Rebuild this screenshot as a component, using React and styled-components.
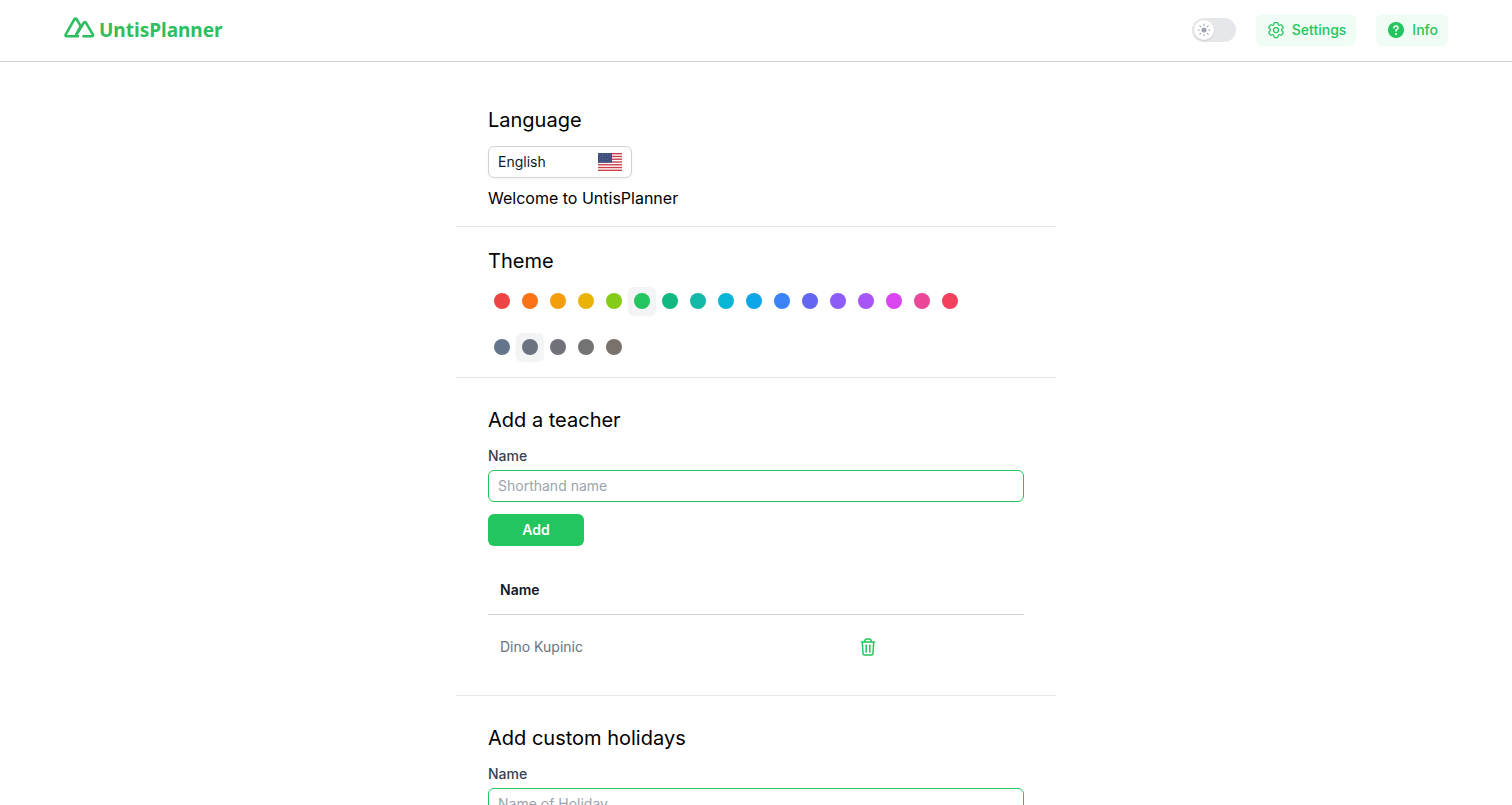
import React, { useState } from "react";
import styled, { createGlobalStyle } from "styled-components";
import { HiOutlineCog6Tooth } from "react-icons/hi2";

const Global = createGlobalStyle`
  *, *::before, *::after { box-sizing: border-box; }
  html { scrollbar-width: none; }
  body { margin: 0; background: #fff; color: #000; font: 16px/24px Inter, sans-serif; }
  h1, h2, p { margin: 0; }
  button, input, select { font: inherit; }
`;

const Header = styled.header`
  display: flex;
  align-items: center;
  justify-content: space-between;
  height: 62px;
  padding: 0 64px 2px;
  border-bottom: 1px solid #d4d4d8;
`;

const Logo = styled.a`
  display: flex;
  align-items: center;
  gap: 4px;
  color: #2dbe60;
  font: 700 19px/28px "Noto Sans", sans-serif;
  text-decoration: none;
`;

const Actions = styled.nav`
  display: flex;
  align-items: center;
  gap: 20px;
`;

const Toggle = styled.button`
  display: flex;
  align-items: center;
  width: 44px;
  height: 24px;
  padding: 2px;
  border: 0;
  border-radius: 12px;
  background: #e5e7eb;
`;

const Knob = styled.span`
  display: grid;
  place-items: center;
  width: 20px;
  height: 20px;
  border-radius: 50%;
  background: #fff;
  color: #9ca3af;
  box-shadow: 0 1px 2px rgba(0, 0, 0, 0.12);
`;

const NavButton = styled.a`
  display: flex;
  align-items: center;
  gap: 6px;
  height: 32px;
  padding: 0 10px;
  border-radius: 6px;
  background: #f0fdf4;
  color: #22c55e;
  font-size: 14px;
  line-height: 20px;
  font-weight: 500;
  text-decoration: none;
`;

const Main = styled.main`
  max-width: 600px;
  margin: 0 auto;
  padding-top: 16px;
`;

const Section = styled.section`
  padding: ${(p) => p.$top || 28}px 32px 16px;
  border-bottom: 1px solid #e5e7eb;
`;

const Heading = styled.h2`
  margin-bottom: 12px;
  font-size: 20px;
  line-height: 28px;
  font-weight: 400;
`;

const SelectBox = styled.div`
  display: grid;
  align-items: center;
  width: 144px;
  margin-bottom: 8px;

  > * { grid-area: 1 / 1; }
  > svg { justify-self: end; margin-right: 10px; pointer-events: none; }
`;

const Select = styled.select`
  appearance: none;
  width: 100%;
  height: 32px;
  padding: 0 9px;
  border: 1px solid #d1d5db;
  border-radius: 6px;
  background: #fff;
  color: #111827;
  font-size: 14px;
  line-height: 20px;
  box-shadow: 0 1px 2px rgba(0, 0, 0, 0.05);
`;

const Swatches = styled.div`
  display: flex;
  flex-wrap: wrap;

  & + & { margin-top: 18px; }
`;

const Swatch = styled.button`
  display: grid;
  place-items: center;
  width: 28px;
  height: 28px;
  padding: 0;
  border: 0;
  border-radius: 6px;
  background: ${(p) => (p.$active ? "#f3f4f6" : "transparent")};
  box-shadow: ${(p) => (p.$active ? "0 1px 2px rgba(0, 0, 0, 0.05)" : "none")};

  &::before {
    content: "";
    width: 16px;
    height: 16px;
    border-radius: 50%;
    background: ${(p) => p.$color};
  }
`;

const Label = styled.label`
  display: block;
  margin-bottom: 4px;
  color: #374151;
  font-size: 14px;
  line-height: 20px;
  font-weight: 500;
`;

const Input = styled.input`
  display: block;
  width: 100%;
  height: 32px;
  padding: 0 9px 1px;
  border: 1px solid #22c55e;
  border-radius: 6px;
  background: #fff;
  font-size: 14px;
  line-height: 20px;
  outline: none;

  &::placeholder { color: #9ca3af; opacity: 1; }
`;

const AddButton = styled.button`
  display: block;
  width: 96px;
  height: 32px;
  margin: 12px 0 20px;
  border: 0;
  border-radius: 6px;
  background: #22c55e;
  color: #fff;
  font-size: 14px;
  line-height: 20px;
  font-weight: 600;
`;

const Table = styled.table`
  width: 100%;
  border-collapse: separate;
  border-spacing: 0;
  table-layout: fixed;
  font-size: 14px;
  line-height: 20px;
  text-align: left;

  th { padding: 14px 12px; border-bottom: 1px solid #d1d5db; color: #111827; font-weight: 600; }
  th:first-child { width: 65%; }
  td { padding: 16px 12px; color: #6b7280; }
`;

const IconButton = styled.button`
  display: grid;
  place-items: center;
  width: 40px;
  height: 32px;
  padding: 0;
  border: 0;
  background: none;
  color: #22c55e;
`;

const LogoMark = () => (
  <svg width="31" height="26" viewBox="0 0 31 26" fill="none" stroke="currentColor" strokeWidth="2.6" strokeLinejoin="round" strokeLinecap="round" aria-hidden="true">
    <path d="M14 19.3H2.6q-1.6-.6-.8-2L10.3 2.4q1.2-1.6 2.4 0l4 6.8L11.7 18.6" />
    <path d="M13.6 15.8 19.8 5.8q1.1-1.4 2.2 0l6.8 11.5q.8 1.6-.8 2H19.4" />
  </svg>
);

const SunIcon = () => (
  <svg width="16" height="16" viewBox="0 0 16 16" fill="currentColor" stroke="currentColor" strokeWidth="1.2" strokeLinecap="round" aria-hidden="true">
    <circle cx="8" cy="8" r="2" />
    <path d="M8 2.2v1M8 12.8v1M2.2 8h1M12.8 8h1M3.9 3.9l.7.7M11.4 11.4l.7.7M3.9 12.1l.7-.7M11.4 4.6l.7-.7" />
  </svg>
);

const HelpIcon = () => (
  <svg width="20" height="20" viewBox="0 0 20 20" aria-hidden="true">
    <circle cx="10" cy="10" r="8" fill="currentColor" />
    <path d="M7.9 8q.1-2 2.1-2t2.1 1.8q0 1-1.1 1.6-1 .6-1 1.6" fill="none" stroke="#fff" strokeWidth="1.5" strokeLinecap="round" />
    <circle cx="10" cy="14" r="1" fill="#fff" />
  </svg>
);

const TrashIcon = () => (
  <svg width="16" height="20" viewBox="0 0 16 20" fill="none" stroke="currentColor" strokeWidth="1.5" strokeLinecap="round" strokeLinejoin="round" aria-hidden="true">
    <path d="M1.4 5h13.2M2.3 5l.7 11.6q.2 1.4 1.6 1.4h6.8q1.4 0 1.6-1.4L13.7 5M4.6 5q.2-3 2-3h2.8q1.8 0 2 3M6.2 8v7M9.8 8v7" />
  </svg>
);

const FlagIcon = () => (
  <svg width="24" height="18" viewBox="0 0 24 18" aria-hidden="true">
    <rect width="24" height="18" fill="#fff" />
    {[0, 1, 2, 3, 4, 5, 6].map((i) => (
      <rect key={i} y={(i * 36) / 13} width="24" height={18 / 13} fill="#c9414d" />
    ))}
    <rect width="14" height="9.7" fill="#3c4f7c" />
    {[0, 1, 2, 3].map((row) =>
      [0, 1, 2, 3, 4].map((col) => (
        <circle key={`${row}-${col}`} cx={1.6 + col * 2.6 + (row % 2) * 0.8} cy={1.6 + row * 2.2} r="0.35" fill="#a9b3c8" />
      ))
    )}
  </svg>
);

const PRIMARY = {
  red: "#ef4444", orange: "#f97316", amber: "#f59e0b", yellow: "#eab308", lime: "#84cc16",
  green: "#22c55e", emerald: "#10b981", teal: "#14b8a6", cyan: "#06b6d4", sky: "#0ea5e9",
  blue: "#3b82f6", indigo: "#6366f1", violet: "#8b5cf6", purple: "#a855f7", fuchsia: "#d946ef",
  pink: "#ec4899", rose: "#f43f5e",
};
const GRAYS = { slate: "#64748b", cool: "#6b7280", zinc: "#71717a", neutral: "#737373", stone: "#78716c" };

function Palette({ colors, initial, label }) {
  const [active, setActive] = useState(initial);
  return (
    <Swatches role="group" aria-label={label}>
      {Object.entries(colors).map(([name, color]) => (
        <Swatch key={name} type="button" aria-label={name} aria-pressed={name === active} $color={color} $active={name === active} onClick={() => setActive(name)} />
      ))}
    </Swatches>
  );
}

export default function App() {
  return (
    <>
      <Global />
      <Header>
        <Logo href="#"><LogoMark />UntisPlanner</Logo>
        <Actions>
          <Toggle type="button" role="switch" aria-checked="false" aria-label="Dark mode"><Knob><SunIcon /></Knob></Toggle>
          <NavButton href="#settings"><HiOutlineCog6Tooth size={20} aria-hidden="true" />Settings</NavButton>
          <NavButton href="#info"><HelpIcon />Info</NavButton>
        </Actions>
      </Header>
      <Main>
        <Section>
          <Heading>Language</Heading>
          <SelectBox>
            <Select aria-label="Language" defaultValue="en"><option value="en">English</option></Select>
            <FlagIcon />
          </SelectBox>
          <p>Welcome to UntisPlanner</p>
        </Section>
        <Section $top={20}>
          <Heading>Theme</Heading>
          <Palette colors={PRIMARY} initial="green" label="Primary color" />
          <Palette colors={GRAYS} initial="cool" label="Gray shade" />
        </Section>
        <Section>
          <Heading>Add a teacher</Heading>
          <Label htmlFor="teacher">Name</Label>
          <Input id="teacher" placeholder="Shorthand name" />
          <AddButton type="button">Add</AddButton>
          <Table>
            <thead><tr><th scope="col">Name</th><th aria-label="Actions" /></tr></thead>
            <tbody>
              <tr>
                <td>Dino Kupinic</td>
                <td><IconButton type="button" aria-label="Delete"><TrashIcon /></IconButton></td>
              </tr>
            </tbody>
          </Table>
        </Section>
        <Section>
          <Heading>Add custom holidays</Heading>
          <Label htmlFor="holiday">Name</Label>
          <Input id="holiday" placeholder="Name of Holiday" />
        </Section>
      </Main>
    </>
  );
}
